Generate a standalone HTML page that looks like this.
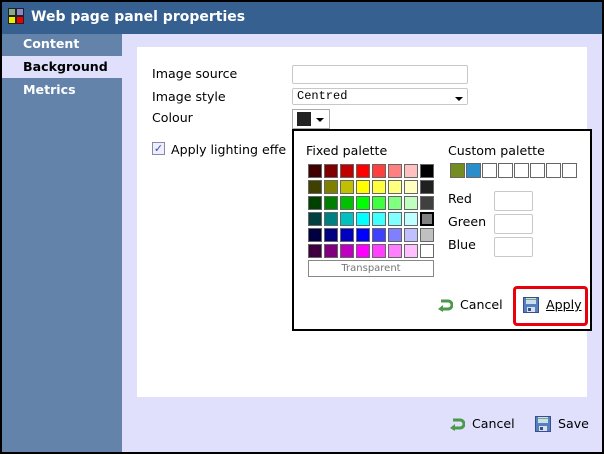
<!DOCTYPE html>
<html><head><style>
*{margin:0;padding:0;box-sizing:border-box}
body{width:604px;height:454px;overflow:hidden;background:#000;font-family:"DejaVu Sans","Liberation Sans",sans-serif;font-size:12.6px;line-height:1.5;position:relative}
.a{position:absolute}
.cell{position:absolute;width:14px;height:14px;border:1px solid #666}
.cc{position:absolute;width:15px;height:15px;border:1px solid #666;top:163px}
.inp{position:absolute;border:1px solid #c8c8c8;background:#fff;border-radius:2px}
</style></head><body>
<div class="a" style="left:2px;top:2px;width:600px;height:450px;background:#e0e0fd"></div>
<div class="a" style="left:2px;top:2px;width:600px;height:32px;background:#35608f"></div>
<svg class="a" style="left:8px;top:8px" width="16" height="16"><rect width="16" height="16" fill="#222"/><rect x="1" y="1" width="6" height="6" fill="#8a8"/><rect x="9" y="1" width="6" height="6" fill="#88c"/><rect x="1" y="9" width="6" height="6" fill="#ee0"/><rect x="9" y="9" width="6" height="6" fill="#e00"/></svg>
<div class="a" style="left:31px;top:7px;color:#fff;font-weight:bold;font-size:14px">Web page panel properties</div>
<div class="a" style="left:2px;top:34px;width:120px;height:418px;background:#6383aa"></div>
<div class="a" style="left:2px;top:56px;width:120px;height:22px;background:#e0e0fd"></div>
<div class="a" style="left:23px;top:35px;color:#fff;font-weight:bold">Content</div>
<div class="a" style="left:23px;top:58px;color:#000;font-weight:bold">Background</div>
<div class="a" style="left:23px;top:81px;color:#fff;font-weight:bold">Metrics</div>
<div class="a" style="left:137px;top:47px;width:450px;height:350px;background:#fff"></div>
<div class="a" style="left:152px;top:65px">Image source</div>
<div class="a" style="left:152px;top:88px">Image style</div>
<div class="a" style="left:152px;top:109px">Colour</div>
<div class="inp" style="left:292px;top:65px;width:176px;height:19px"></div>
<div class="inp" style="left:292px;top:88px;width:176px;height:17px"></div>
<div class="a" style="left:297px;top:87px;font-family:'Liberation Mono',monospace;font-size:12px">Centred</div>
<div class="a" style="left:455px;top:97px;border-left:4px solid transparent;border-right:4px solid transparent;border-top:4px solid #000"></div>
<div class="a" style="left:292px;top:109px;width:38px;height:20px;border:1px solid #aaa;background:#fff"></div>
<div class="a" style="left:297px;top:112px;width:14px;height:14px;background:#222"></div>
<div class="a" style="left:316px;top:118px;border-left:4px solid transparent;border-right:4px solid transparent;border-top:4px solid #000"></div>
<div class="a" style="left:152px;top:142px;width:13px;height:13px;border:1px solid #8a8aa8;background:#eef;font-size:11px;line-height:11px;text-align:center;color:#3450a0">✓</div>
<div class="a" style="left:171px;top:141px">Apply lighting effe</div>
<div class="a" style="left:292px;top:129px;width:300px;height:202px;border:2px solid #000;background:#fff"></div>
<div class="a" style="left:306px;top:142px">Fixed palette</div>
<div class="a" style="left:448px;top:142px">Custom palette</div>
<div id="pal"></div>
<div class="a" style="left:308px;top:260px;width:126px;height:17px;border:1px solid #888;font-size:10px;color:#777;text-align:center;line-height:15px">Transparent</div>
<div class="cc" style="left:450px;background:#758c22"></div>
<div class="cc" style="left:466px;background:#2a8ecb"></div>
<div class="cc" style="left:482px"></div><div class="cc" style="left:498px"></div><div class="cc" style="left:514px"></div><div class="cc" style="left:530px"></div><div class="cc" style="left:546px"></div><div class="cc" style="left:562px"></div>
<div class="a" style="left:448px;top:190px">Red</div>
<div class="a" style="left:448px;top:213px">Green</div>
<div class="a" style="left:448px;top:236px">Blue</div>
<div class="inp" style="left:494px;top:191px;width:39px;height:20px"></div>
<div class="inp" style="left:494px;top:214px;width:39px;height:20px"></div>
<div class="inp" style="left:494px;top:237px;width:39px;height:20px"></div>
<svg class="a" style="left:437px;top:298px" width="16" height="14"><path d="M4 3 H11 A4 4 0 0 1 11 11 H3" fill="none" stroke="#4a9a4a" stroke-width="3"/><path d="M1 11 L6 7 L6 14Z" fill="#4a9a4a"/></svg>
<div class="a" style="left:460px;top:296px">Cancel</div>
<div class="a" style="left:513px;top:286px;width:75px;height:40px;border:3px solid #e8000c;border-radius:4px"></div>
<svg class="a" style="left:523px;top:297px" width="16" height="16"><rect x=".5" y=".5" width="15" height="15" fill="#5580c0" stroke="#34508a"/><rect x="3" y="1" width="10" height="6" fill="#cde"/><rect x="3" y="2" width="10" height="1" fill="#7a7"/><rect x="4" y="10" width="8" height="5" fill="#dde"/><rect x="5" y="11" width="3" height="3" fill="#34508a"/></svg>
<div class="a" style="left:546px;top:296px;text-decoration:underline">Apply</div>
<svg class="a" style="left:449px;top:417px" width="16" height="14"><path d="M4 3 H11 A4 4 0 0 1 11 11 H3" fill="none" stroke="#4a9a4a" stroke-width="3"/><path d="M1 11 L6 7 L6 14Z" fill="#4a9a4a"/></svg>
<div class="a" style="left:472px;top:415px">Cancel</div>
<svg class="a" style="left:535px;top:416px" width="16" height="16"><rect x=".5" y=".5" width="15" height="15" fill="#5580c0" stroke="#34508a"/><rect x="3" y="1" width="10" height="6" fill="#cde"/><rect x="3" y="2" width="10" height="1" fill="#7a7"/><rect x="4" y="10" width="8" height="5" fill="#dde"/><rect x="5" y="11" width="3" height="3" fill="#34508a"/></svg>
<div class="a" style="left:558px;top:415px">Save</div>
<script>
var c=[["#400000","#800000","#c00000","#ff0000","#ff4040","#ff8080","#ffc0c0","#000000"],
["#404000","#808000","#c0c000","#ffff00","#ffff40","#ffff80","#ffffc0","#202020"],
["#004000","#008000","#00c000","#00ff00","#40ff40","#80ff80","#c0ffc0","#404040"],
["#004040","#008080","#00c0c0","#00ffff","#40ffff","#80ffff","#c0ffff","#808080"],
["#000040","#000080","#0000c0","#0000ff","#4040ff","#8080ff","#c0c0ff","#c0c0c0"],
["#400040","#800080","#c000c0","#ff00ff","#ff40ff","#ff80ff","#ffc0ff","#ffffff"]];
var h="";for(var r=0;r<6;r++)for(var k=0;k<8;k++){h+='<div class="cell" style="left:'+(308+k*16)+'px;top:'+(164+r*16)+'px;background:'+c[r][k]+(r==3&&k==7?';border:2px solid #000':'')+'"></div>';}
document.getElementById("pal").innerHTML=h;
</script>
</body></html>
